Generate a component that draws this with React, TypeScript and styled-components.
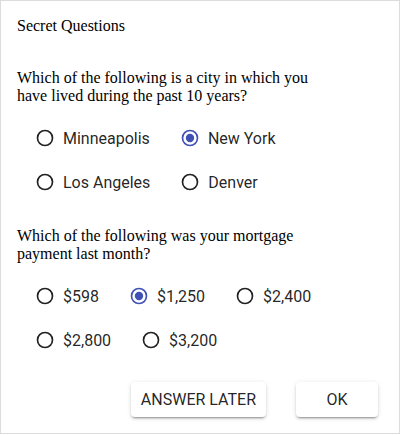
import React, { useState } from 'react';
import styled, { createGlobalStyle } from 'styled-components';

const cityOptions = ['Minneapolis', 'New York', 'Los Angeles', 'Denver'];
const paymentOptions = ['$598', '$1,250', '$2,400', '$2,800', '$3,200'];

const RadioIcon = ({ checked }: { checked: boolean }) => (
    <svg width="20" height="20" viewBox="0 0 24 24">
        <circle cx="12" cy="12" r="9" fill="none" stroke={checked ? '#3f51b5' : 'rgba(0,0,0,0.87)'} strokeWidth="2" />
        {checked && <circle cx="12" cy="12" r="5" fill="#3f51b5" />}
    </svg>
);

type GroupProps = {
    options: string[];
    value: string;
    onChange: (v: string) => void;
};

const RadioGroup = ({ options, value, onChange }: GroupProps) => (
    <Group>
        {options.map((opt) => (
            <Option key={opt} onClick={() => onChange(opt)}>
                <RadioIcon checked={opt === value} />
                <span>{opt}</span>
            </Option>
        ))}
    </Group>
);

const App = () => {
    const [city, setCity] = useState('New York');
    const [payment, setPayment] = useState('$1,250');

    return (
        <>
            <GlobalStyle />
            <Dialog>
                <Title>Secret Questions</Title>
                <Question>Which of the following is a city in which you have lived during the past 10 years?</Question>
                <RadioGroup options={cityOptions} value={city} onChange={setCity} />
                <Question $spaced>Which of the following was your mortgage payment last month?</Question>
                <RadioGroup options={paymentOptions} value={payment} onChange={setPayment} />
                <Actions>
                    <Button>ANSWER LATER</Button>
                    <Button $wide>OK</Button>
                </Actions>
            </Dialog>
        </>
    );
};
export default App;

const GlobalStyle = createGlobalStyle`
    body{
        margin: 0;
        background: #fff;
    }
`;

const Dialog = styled.div`
    box-sizing: border-box;
    width: 400px;
    height: 434px;
    border: 1px solid #dcdcdc;
    padding: 16px 16px 16px 16px;
    display: flex;
    flex-direction: column;
`;

const Title = styled.div`
    font-family: 'Liberation Serif', 'Times New Roman', serif;
    font-size: 16px;
    line-height: 18px;
    color: #000;
`;

const Question = styled.div<{ $spaced?: boolean }>`
    font-family: 'Liberation Serif', 'Times New Roman', serif;
    font-size: 16px;
    line-height: 18px;
    color: #000;
    width: 300px;
    margin-top: ${(p) => (p.$spaced ? '23px' : '34px')};
    margin-bottom: 11px;
`;

const Group = styled.div`
    display: flex;
    flex-wrap: wrap;
    column-gap: 30px;
    padding-left: 18px;
`;

const Option = styled.label`
    display: flex;
    align-items: center;
    gap: 8px;
    height: 44px;
    font-family: Roboto, 'Liberation Sans', sans-serif;
    font-size: 16px;
    color: rgba(0, 0, 0, 0.87);
    cursor: pointer;
    svg{
        flex: none;
    }
`;

const Actions = styled.div`
    display: flex;
    justify-content: flex-end;
    gap: 30px;
    margin-top: auto;
    padding-right: 5px;
`;

const Button = styled.button<{ $wide?: boolean }>`
    height: 35px;
    min-width: ${(p) => (p.$wide ? '82px' : '0')};
    padding: 0 10px;
    border: none;
    border-radius: 4px;
    background: #fff;
    font-family: Roboto, 'Liberation Sans', sans-serif;
    font-size: 16px;
    color: rgba(0, 0, 0, 0.87);
    box-shadow: 0 3px 1px -2px rgba(0,0,0,0.2), 0 2px 2px 0 rgba(0,0,0,0.14), 0 1px 5px 0 rgba(0,0,0,0.12);
    cursor: pointer;
`;
